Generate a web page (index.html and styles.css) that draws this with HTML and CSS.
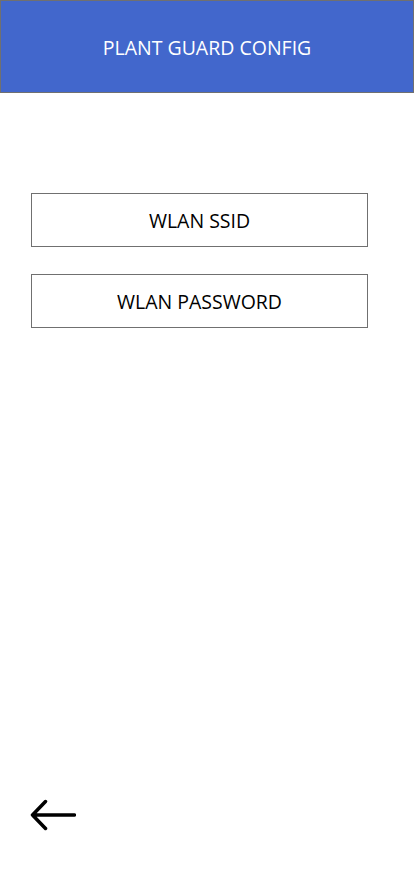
FILE: index.html
```html
<!DOCTYPE html>
<html>
<head>
<meta charset="utf-8">
<link rel="stylesheet" href="styles.css">
</head>
<body>
<div class="app">
  <header class="header">PLANT GUARD CONFIG</header>
  <main class="form">
    <input class="field" type="text" placeholder="WLAN SSID">
    <input class="field" type="password" placeholder="WLAN PASSWORD">
  </main>
  <footer class="footer">
    <svg class="back" width="46" height="32" viewBox="0 0 46 32">
      <path d="M44.5 16H2.5M15.5 2.5L2.5 16l13 13.5" fill="none" stroke="#000" stroke-width="3.5" stroke-linecap="round" stroke-linejoin="round"/>
    </svg>
  </footer>
</div>
</body>
</html>
```
FILE: styles.css
```css
* { box-sizing: border-box; }
html, body { margin: 0; padding: 0; background: #fff; }
body { font-family: "Open Sans", "Noto Sans", sans-serif; }
.app {
  width: 414px;
  height: 896px;
  display: flex;
  flex-direction: column;
}
.header {
  height: 93px;
  background: #4267cc;
  border: 1px solid #707070;
  color: #fff;
  font-size: 19.5px;
  display: flex;
  align-items: center;
  justify-content: center;
  padding-top: 2px;
}
.form {
  display: flex;
  flex-direction: column;
  gap: 27px;
  padding: 100px 0 0 31px;
  flex: 1;
}
.field {
  width: 337px;
  height: 54px;
  border: 1px solid #707070;
  border-radius: 0;
  background: #fff;
  font-family: inherit;
  font-size: 19.5px;
  text-align: center;
  outline: none;
  padding: 0;
}
.field::placeholder { color: #000; opacity: 1; }
.footer {
  padding: 0 0 65px 30px;
}
.back { display: block; }
```
